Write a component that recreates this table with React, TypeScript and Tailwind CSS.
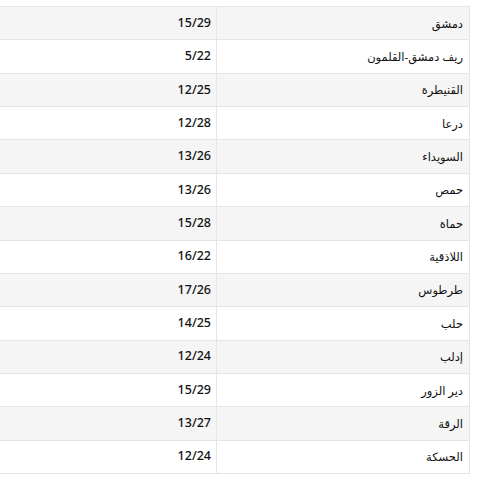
import React from "react";

const rows: [string, string][] = [
  ["دمشق", "15/29"],
  ["ريف دمشق-القلمون", "5/22"],
  ["القنيطرة", "12/25"],
  ["درعا", "12/28"],
  ["السويداء", "13/26"],
  ["حمص", "13/26"],
  ["حماة", "15/28"],
  ["اللاذقية", "16/22"],
  ["طرطوس", "17/26"],
  ["حلب", "14/25"],
  ["إدلب", "12/24"],
  ["دير الزور", "15/29"],
  ["الرقة", "13/27"],
  ["الحسكة", "12/24"],
];

export default function App() {
  return (
    <div className="w-[483px] h-[479px] bg-white overflow-hidden pt-[6px] pr-[13px]" dir="rtl">
      <table
        className="w-[700px] border-collapse text-[#111]"
        style={{ fontFamily: '"Noto Sans", "DejaVu Sans", sans-serif' }}
      >
        <tbody>
          {rows.map(([city, t], i) => (
            <tr key={i} className={i % 2 === 0 ? "bg-[#f5f5f5]" : "bg-white"}>
              <td className="w-[253px] h-[33.36px] border border-[#e5e5e5] px-[6px] text-right align-middle text-[11.5px]">
                {city}
              </td>
              <td className="h-[33.36px] border border-[#e5e5e5] px-[5px] text-right align-middle text-[12.5px] font-medium">
                <span dir="ltr">{t}</span>
              </td>
            </tr>
          ))}
        </tbody>
      </table>
    </div>
  );
}
